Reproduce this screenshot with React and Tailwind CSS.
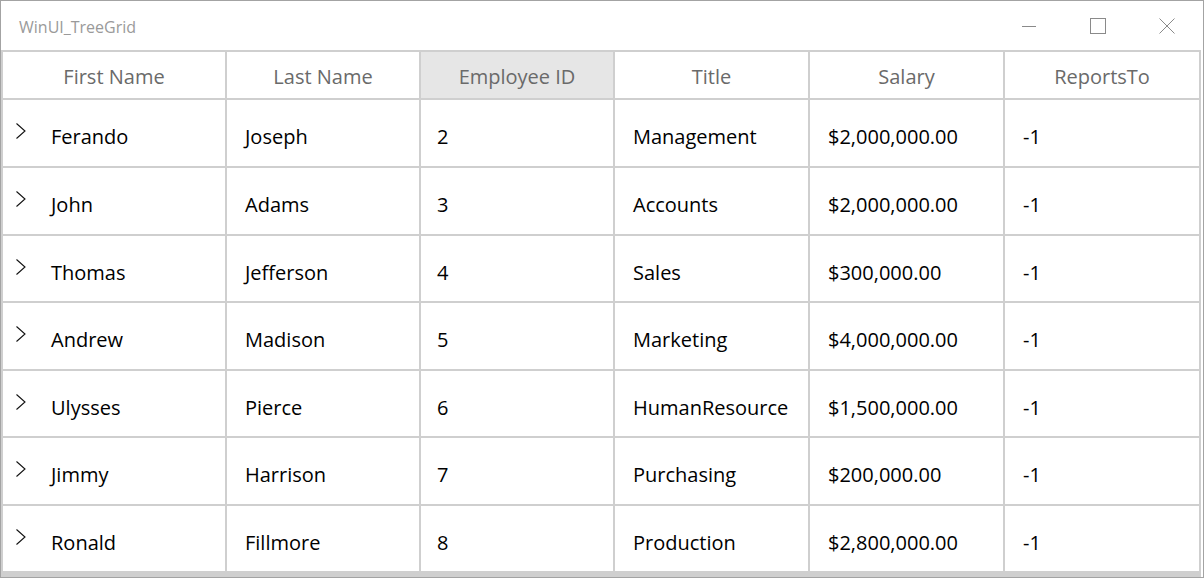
const columns = ["First Name", "Last Name", "Employee ID", "Title", "Salary", "ReportsTo"];

const employees = [
  { first: "Ferando", last: "Joseph", id: 2, title: "Management", salary: "$2,000,000.00", h: "h-[68px]" },
  { first: "John", last: "Adams", id: 3, title: "Accounts", salary: "$2,000,000.00", h: "h-[68px]" },
  { first: "Thomas", last: "Jefferson", id: 4, title: "Sales", salary: "$300,000.00", h: "h-[67px]" },
  { first: "Andrew", last: "Madison", id: 5, title: "Marketing", salary: "$4,000,000.00", h: "h-[68px]" },
  { first: "Ulysses", last: "Pierce", id: 6, title: "HumanResource", salary: "$1,500,000.00", h: "h-[67px]" },
  { first: "Jimmy", last: "Harrison", id: 7, title: "Purchasing", salary: "$200,000.00", h: "h-[68px]" },
  { first: "Ronald", last: "Fillmore", id: 8, title: "Production", salary: "$2,800,000.00", h: "h-[67px]" },
];

const gridCols = "grid grid-cols-[224px_194px_194px_195px_195px_194px]";

function Chevron() {
  return (
    <svg className="absolute left-[12px] top-[22px]" width="12" height="18" viewBox="0 0 12 18">
      <path d="M1.5 1.5 L10 9 L1.5 16.5" fill="none" stroke="#111" strokeWidth="1.1" />
    </svg>
  );
}

function TitleBar() {
  return (
    <div className="h-[49px] flex items-center justify-between pl-[18px] shrink-0">
      <span className="text-[16px] text-[#9a9a9a] pt-[3px]">WinUI_TreeGrid</span>
      <div className="flex items-center h-full">
        <div className="w-[69px] h-full flex items-center justify-center">
          <svg width="16" height="16" viewBox="0 0 16 16">
            <line x1="1" y1="8.5" x2="15" y2="8.5" stroke="#8a8a8a" strokeWidth="1" />
          </svg>
        </div>
        <div className="w-[69px] h-full flex items-center justify-center">
          <svg width="16" height="16" viewBox="0 0 16 16">
            <rect x="0.5" y="0.5" width="15" height="15" fill="none" stroke="#8a8a8a" strokeWidth="1" />
          </svg>
        </div>
        <div className="w-[69px] h-full flex items-center justify-center mr-[2px]">
          <svg width="16" height="16" viewBox="0 0 16 16">
            <path d="M0.5 0.5 L15.5 15.5 M15.5 0.5 L0.5 15.5" stroke="#8a8a8a" strokeWidth="1" fill="none" />
          </svg>
        </div>
      </div>
    </div>
  );
}

export default function App() {
  return (
    <div
      className="w-[1204px] h-[578px] bg-white border border-[#a3a3a3] flex flex-col overflow-hidden"
      style={{ fontFamily: '"Open Sans", "Noto Sans", sans-serif' }}
    >
      <TitleBar />
      <div className="flex-1 mr-[2px] border-2 border-[#cfcfcf] border-b-[4px] overflow-hidden">
        {/* header */}
        <div className={`${gridCols} h-[48px] border-b-2 border-[#cfcfcf]`}>
          {columns.map((c, i) => (
            <div
              key={c}
              className={`flex items-center justify-center pt-[3px] text-[20px] text-[#6a6a6a] ${i < 5 ? "border-r-2 border-[#cfcfcf]" : ""} ${c === "Employee ID" ? "bg-[#e6e6e6]" : ""}`}
            >
              {c}
            </div>
          ))}
        </div>
        {/* rows */}
        {employees.map((e) => (
          <div key={e.id} className={`${gridCols} ${e.h} border-b-2 border-[#cfcfcf] text-[20px] text-black`}>
            <div className="relative flex items-center pl-[48px] pt-[8px] border-r-2 border-[#cfcfcf]">
              <Chevron />
              {e.first}
            </div>
            <div className="flex items-center pl-[18px] pt-[8px] border-r-2 border-[#cfcfcf]">{e.last}</div>
            <div className="flex items-center pl-[16px] pt-[8px] border-r-2 border-[#cfcfcf]">{e.id}</div>
            <div className="flex items-center pl-[18px] pt-[8px] border-r-2 border-[#cfcfcf]">{e.title}</div>
            <div className="flex items-center pl-[18px] pt-[8px] border-r-2 border-[#cfcfcf]">{e.salary}</div>
            <div className="flex items-center pl-[18px] pt-[8px]">-1</div>
          </div>
        ))}
      </div>
    </div>
  );
}
